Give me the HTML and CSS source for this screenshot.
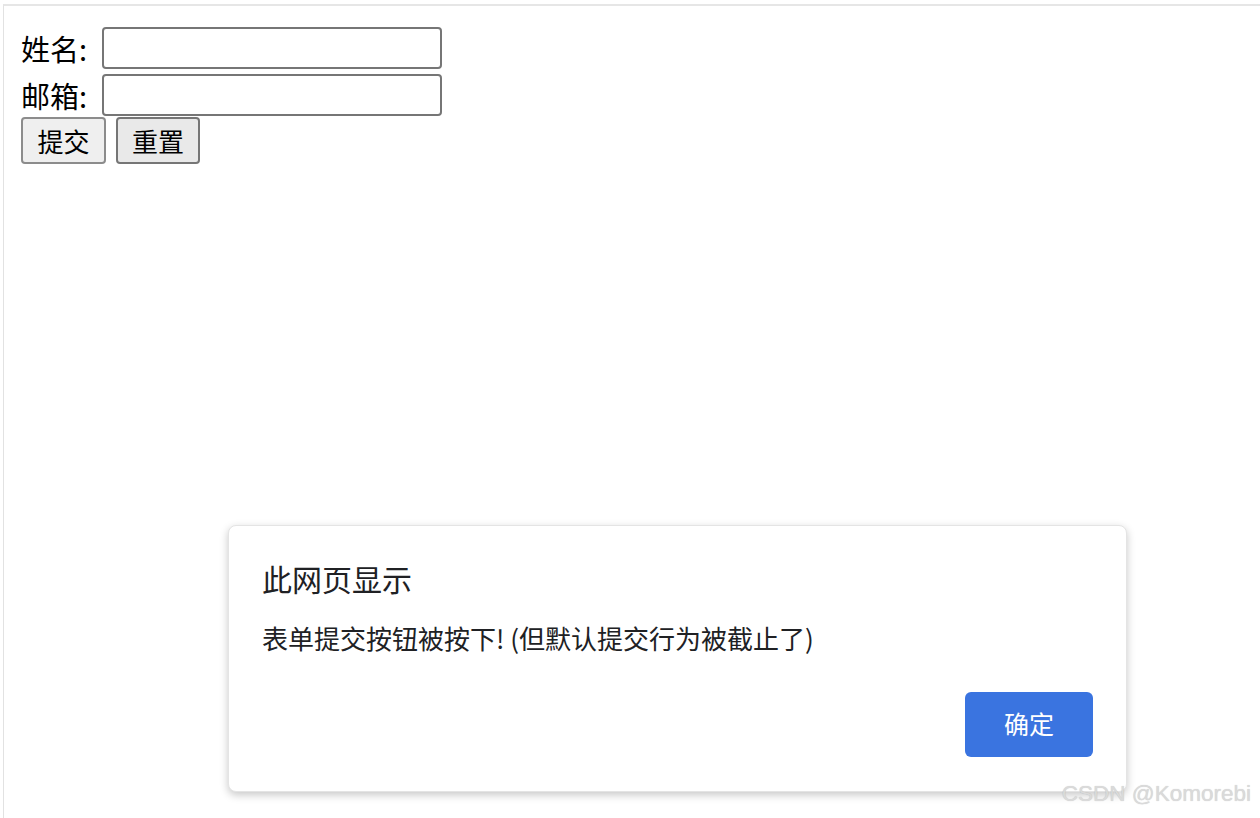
FILE: index.html
```html
<!DOCTYPE html>
<html lang="zh-CN">
<head>
    <meta charset="UTF-8">
    <meta name="viewport" content="width=device-width, initial-scale=1.0">
    <title>表单提交</title>
    <link rel="stylesheet" href="styles.css">
</head>
<body>
    <div class="window">
        <form id="userForm" class="form">
            <div class="row">
                <label for="username">姓名:</label>
                <input type="text" id="username" name="username">
            </div>
            <div class="row row-second">
                <label for="email">邮箱:</label>
                <input type="text" id="email" name="email">
            </div>
            <div class="actions">
                <button type="submit" class="btn btn-submit">提交</button>
                <button type="reset" class="btn btn-hover">重置</button>
            </div>
        </form>

        <!-- alert dialog -->
        <div class="dialog">
            <div class="dialog-title">此网页显示</div>
            <div class="dialog-message">表单提交按钮被按下! (但默认提交行为被截止了)</div>
            <div class="dialog-footer">
                <button type="button" class="dialog-ok">确定</button>
            </div>
        </div>

        <div class="watermark">CSDN @Komorebi</div>
    </div>
</body>
</html>
```

FILE: styles.css
```css
html, body {
    margin: 0;
    padding: 0;
    background-color: #fff;
    overflow: hidden;
}
body {
    font-family: "Noto Sans CJK SC", "Noto Sans", sans-serif;
    color: #000;
}
.window {
    position: relative;
    margin: 4px 0 0 3px;
    height: 814px;
    border-top: 2px solid #e6e6e6;
    border-left: 1px solid #e2e2e2;
    box-sizing: border-box;
}
.form {
    display: flex;
    flex-direction: column;
    padding: 21px 0 0 17px;
}
.row {
    display: flex;
    align-items: center;
    height: 42px;
}
.row-second {
    margin-top: 5px;
}
label {
    width: 81px;
    font-size: 29px;
    line-height: 42px;
}
input {
    width: 340px;
    height: 42px;
    margin: 0;
    padding: 0 6px;
    border: 2px solid #767676;
    border-radius: 4px;
    background-color: #fff;
    box-sizing: border-box;
    font-size: 20px;
}
.actions {
    display: flex;
    gap: 10px;
    margin-top: 1px;
}
.btn {
    width: 84px;
    height: 47px;
    padding: 0;
    margin: 0;
    border: 2px solid #8c8c8c;
    border-radius: 4px;
    background-color: #efefef;
    font-family: inherit;
    font-size: 26px;
    line-height: 1;
    color: #000;
}
.btn-submit {
    width: 85px;
}
.btn-hover {
    border-color: #767676;
    background-color: #e9e9e9;
}
.dialog {
    position: absolute;
    left: 224px;
    top: 519px;
    width: 899px;
    padding: 32px 33px 34px;
    background-color: #fff;
    border: 1px solid #e4e4e4;
    border-radius: 8px;
    box-shadow: 0 3px 8px rgba(0, 0, 0, 0.22);
    box-sizing: border-box;
}
.dialog-title {
    font-size: 30px;
    line-height: 40px;
    color: #202124;
}
.dialog-message {
    margin-top: 22px;
    font-size: 26px;
    line-height: 36px;
    color: #202124;
}
.dialog-footer {
    display: flex;
    justify-content: flex-end;
    margin-top: 36px;
}
.dialog-ok {
    width: 128px;
    height: 65px;
    padding: 0 0 3px;
    border: none;
    border-radius: 6px;
    background-color: #3a74e0;
    color: #fff;
    font-family: inherit;
    font-size: 25px;
}
.watermark {
    position: absolute;
    right: 9px;
    top: 775px;
    font-family: "Liberation Sans", Arial, sans-serif;
    font-size: 22.5px;
    color: #dadada;
    text-shadow: 0 0 1px rgba(0, 0, 0, 0.2);
}
```
